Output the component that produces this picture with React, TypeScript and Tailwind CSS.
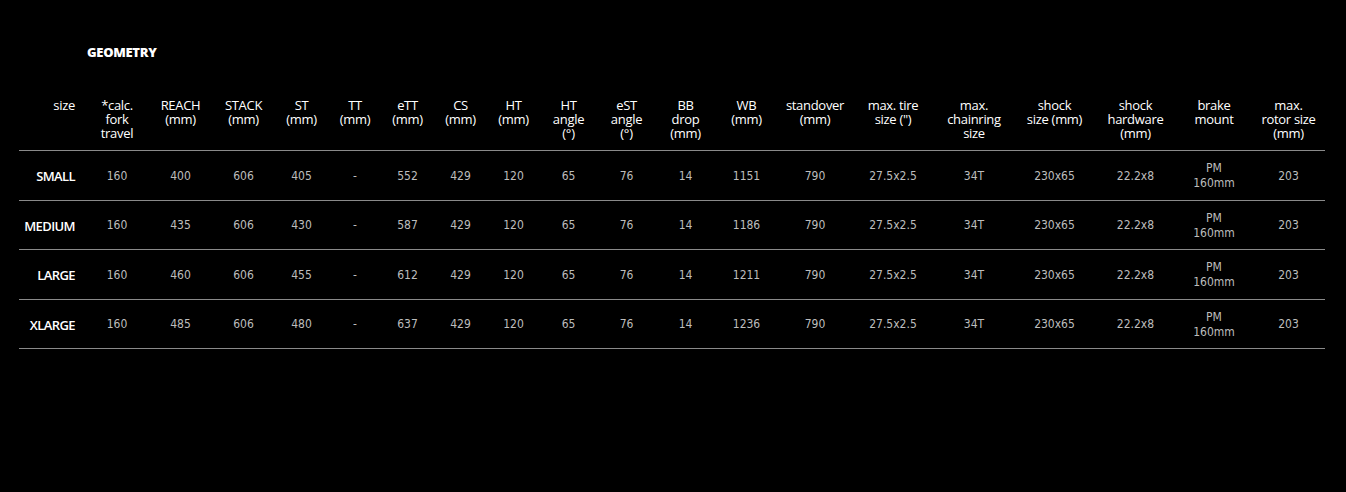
import React from 'react';

const WIDTHS = ['w-[67px]', 'w-[62px]', 'w-[65px]', 'w-[61px]', 'w-[55px]', 'w-[52px]', 'w-[53px]', 'w-[53px]', 'w-[53px]', 'w-[57px]', 'w-[59px]', 'w-[59px]', 'w-[63px]', 'w-[74px]', 'w-[82px]', 'w-[80px]', 'w-[81px]', 'w-[81px]', 'w-[76px]', 'w-[73px]'];

const HEADERS: string[][] = [
  ['size'],
  ['*calc.', 'fork', 'travel'],
  ['REACH', '(mm)'],
  ['STACK', '(mm)'],
  ['ST', '(mm)'],
  ['TT', '(mm)'],
  ['eTT', '(mm)'],
  ['CS', '(mm)'],
  ['HT', '(mm)'],
  ['HT', 'angle', '(°)'],
  ['eST', 'angle', '(°)'],
  ['BB', 'drop', '(mm)'],
  ['WB', '(mm)'],
  ['standover', '(mm)'],
  ['max. tire', 'size (")'],
  ['max.', 'chainring', 'size'],
  ['shock', 'size (mm)'],
  ['shock', 'hardware', '(mm)'],
  ['brake', 'mount'],
  ['max.', 'rotor size', '(mm)'],
];

const ROWS: string[][] = [
  ['SMALL', '160', '400', '606', '405', '-', '552', '429', '120', '65', '76', '14', '1151', '790', '27.5x2.5', '34T', '230x65', '22.2x8', 'PM|160mm', '203'],
  ['MEDIUM', '160', '435', '606', '430', '-', '587', '429', '120', '65', '76', '14', '1186', '790', '27.5x2.5', '34T', '230x65', '22.2x8', 'PM|160mm', '203'],
  ['LARGE', '160', '460', '606', '455', '-', '612', '429', '120', '65', '76', '14', '1211', '790', '27.5x2.5', '34T', '230x65', '22.2x8', 'PM|160mm', '203'],
  ['XLARGE', '160', '485', '606', '480', '-', '637', '429', '120', '65', '76', '14', '1236', '790', '27.5x2.5', '34T', '230x65', '22.2x8', 'PM|160mm', '203'],
];

export default function App() {
  return (
    <div className="min-h-[492px] w-full bg-black pl-[19px] pr-[21px] pt-[44px] font-['Open_Sans',sans-serif]">
      <h2 className="ml-[68px] text-[13px] font-extrabold leading-4 tracking-[-0.3px] text-white">GEOMETRY</h2>

      <table className="mt-[38px] w-[1306px] table-fixed border-collapse">
        <colgroup>
          {WIDTHS.map((w, i) => (
            <col key={i} className={w} />
          ))}
        </colgroup>
        <thead>
          <tr className="border-b border-[#8a8a8a]">
            {HEADERS.map((lines, i) => (
              <th
                key={i}
                className={`pb-[10px] align-top text-[13px] font-normal leading-[14px] tracking-[-0.3px] text-white ${i === 0 ? 'pr-[11px] text-right' : 'text-center'}`}
              >
                {lines.map((l, j) => (
                  <div key={j} className="whitespace-nowrap">{l}</div>
                ))}
              </th>
            ))}
          </tr>
        </thead>
        <tbody>
          {ROWS.map((row, r) => (
            <tr key={r} className="h-[49.5px] border-b border-[#8a8a8a]">
              {row.map((cell, i) =>
                i === 0 ? (
                  <td key={i} className="pr-[11px] pt-[2px] text-right align-middle text-[13px] font-semibold leading-4 tracking-[-0.6px] text-white">
                    {cell}
                  </td>
                ) : (
                  <td key={i} className="pt-[2px] text-center align-middle font-['DejaVu_Sans_Condensed','DejaVu_Sans',sans-serif] text-[12px] leading-[15px] text-[#bdbdbd]">
                    {cell.split('|').map((l, j) => (
                      <div key={j}>{l}</div>
                    ))}
                  </td>
                )
              )}
            </tr>
          ))}
        </tbody>
      </table>
    </div>
  );
}
